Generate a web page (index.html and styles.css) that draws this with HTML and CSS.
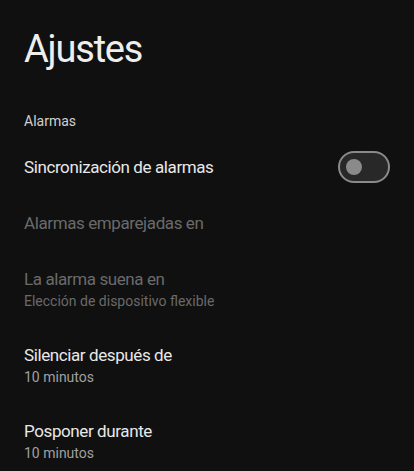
FILE: index.html
```html
<!DOCTYPE html>
<html lang="es">
<head>
    <meta charset="UTF-8">
    <meta name="viewport" content="width=device-width, initial-scale=1.0">
    <title>Ajustes</title>
    <link rel="stylesheet" href="styles.css">
</head>
<body>
    <div class="pantalla">
        <h1 class="titulo">Ajustes</h1>

        <div class="seccion">Alarmas</div>

        <div class="fila">
            <div class="textos">
                <div class="nombre">Sincronización de alarmas</div>
            </div>
            <div class="interruptor"><span class="bola"></span></div>
        </div>

        <div class="fila apagada">
            <div class="textos">
                <div class="nombre">Alarmas emparejadas en</div>
            </div>
        </div>

        <div class="fila apagada">
            <div class="textos">
                <div class="nombre">La alarma suena en</div>
                <div class="valor">Elección de dispositivo flexible</div>
            </div>
        </div>

        <div class="fila">
            <div class="textos">
                <div class="nombre">Silenciar después de</div>
                <div class="valor">10 minutos</div>
            </div>
        </div>

        <div class="fila">
            <div class="textos">
                <div class="nombre">Posponer durante</div>
                <div class="valor">10 minutos</div>
            </div>
        </div>
    </div>
</body>
</html>
```

FILE: styles.css
```css
body {
    margin: 0;
    background-color: #101010;
    font-family: Roboto, "Noto Sans", sans-serif;
    color: #e8e8e8;
}
.pantalla {
    padding: 0 24px;
    height: 471px;
    overflow: hidden;
}
.titulo {
    font-size: 38px;
    font-weight: 400;
    letter-spacing: -1.2px;
    margin: 0;
    padding-top: 25px;
    line-height: 48px;
    color: #eeeeee;
}
.seccion {
    margin-top: 38px;
    padding-bottom: 8px;
    font-size: 14px;
    line-height: 20px;
    color: #d0d0d0;
}
.fila {
    display: flex;
    align-items: center;
    justify-content: space-between;
    padding: 16px 0;
}
.nombre {
    font-size: 17px;
    line-height: 24px;
    letter-spacing: -0.4px;
}
.valor {
    font-size: 14px;
    line-height: 20px;
    color: #a0a0a0;
}
.apagada .nombre,
.apagada .valor {
    color: #6a6a6a;
}
.interruptor {
    width: 42px;
    height: 28px;
    border: 2px solid #8a8a8a;
    border-radius: 16px;
    background-color: #282828;
    display: flex;
    align-items: center;
    padding-left: 6px;
    margin: -12px 0;
}
.bola {
    width: 16px;
    height: 16px;
    border-radius: 50%;
    background-color: #8a8a8a;
}
```
